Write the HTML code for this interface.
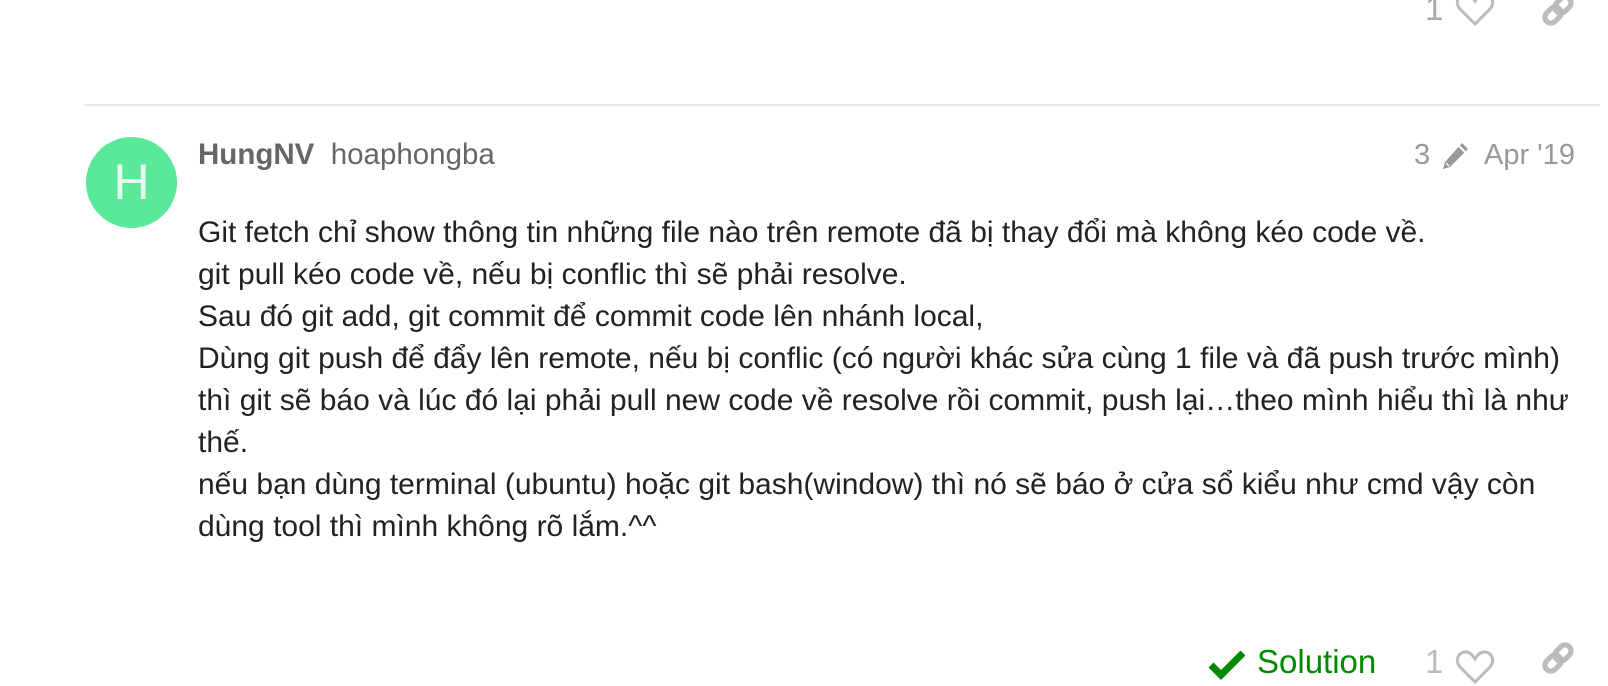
<!DOCTYPE html>
<html><head><meta charset="utf-8"><style>
body{margin:0;width:1608px;height:676px;background:#fff;font-family:"Liberation Sans",Arial,sans-serif;position:relative;overflow:hidden}
.a{position:absolute;white-space:nowrap}
.g{color:#999}
.body{left:198px;top:212px;font-size:30px;line-height:42px;color:#222;width:1382px;white-space:normal}
.body p{margin:0}
</style></head><body>
<div class="a g" style="left:1425px;top:-10px;font-size:33px;color:#aaa">1</div>
<svg class="a" style="left:1455px;top:-8px" width="40" height="36" viewBox="0 0 40 36"><path d="M20 32 L5 17 C-1 10 4 1 12 2 C16 3 18 6 20 9 C22 6 24 3 28 2 C36 1 41 10 35 17 Z" fill="none" stroke="#bbb" stroke-width="3"/></svg>
<svg class="a" style="left:1540px;top:-8px" width="36" height="36" viewBox="0 0 36 36"><g fill="none" stroke="#bbb" stroke-width="5" transform="rotate(-45 18 18)"><rect x="2" y="12" width="18" height="12" rx="6"/><rect x="16" y="12" width="18" height="12" rx="6"/></g></svg>
<div class="a" style="left:84px;top:104px;width:1516px;height:2px;background:#e9e9e9"></div>
<div class="a" style="left:86px;top:137px;width:91px;height:91px;border-radius:50%;background:#5ae89b;color:#e6fbef;font-size:50px;line-height:91px;text-align:center">H</div>
<div class="a" style="left:198px;top:138px;font-size:29.5px;color:#666"><b>HungNV</b>&nbsp; hoaphongba</div>
<div class="a g" style="left:1414px;top:139px;font-size:29px">3</div>
<svg class="a" style="left:1440px;top:141px" width="30" height="30" viewBox="0 0 30 30"><path d="M22 2 L28 8 L10 26 L3 28 L5 21 Z" fill="#999"/><path d="M19 5 L25 11" stroke="#fff" stroke-width="2"/><path d="M6 22 L9 25" stroke="#fff" stroke-width="1.5"/></svg>
<div class="a g" style="left:1484px;top:139px;font-size:29px">Apr '19</div>
<div class="a body">
<p>Git fetch chỉ show thông tin những file nào trên remote đã bị thay đổi mà không kéo code về.</p>
<p>git pull kéo code về, nếu bị conflic thì sẽ phải resolve.</p>
<p>Sau đó git add, git commit để commit code lên nhánh local,</p>
<p>Dùng git push để đẩy lên remote, nếu bị conflic (có người khác sửa cùng 1 file và đã push trước mình) thì git sẽ báo và lúc đó lại phải pull new code về resolve rồi commit, push lại…theo mình hiểu thì là như thế.</p>
<p>nếu bạn dùng terminal (ubuntu) hoặc git bash(window) thì nó sẽ báo ở cửa sổ kiểu như cmd vậy còn dùng tool thì mình không rõ lắm.^^</p>
</div>
<svg class="a" style="left:1208px;top:650px" width="38" height="30" viewBox="0 0 38 30"><path d="M3 15 L13 25 L35 3" fill="none" stroke="#008a00" stroke-width="7"/></svg>
<div class="a" style="left:1257px;top:643px;font-size:33px;color:#008a00">Solution</div>
<div class="a" style="left:1425px;top:643px;font-size:33px;color:#bbb">1</div>
<svg class="a" style="left:1455px;top:650px" width="40" height="36" viewBox="0 0 40 36"><path d="M20 32 L5 17 C-1 10 4 1 12 2 C16 3 18 6 20 9 C22 6 24 3 28 2 C36 1 41 10 35 17 Z" fill="none" stroke="#bbb" stroke-width="3"/></svg>
<svg class="a" style="left:1540px;top:640px" width="36" height="36" viewBox="0 0 36 36"><g fill="none" stroke="#bbb" stroke-width="5" transform="rotate(-45 18 18)"><rect x="2" y="12" width="18" height="12" rx="6"/><rect x="16" y="12" width="18" height="12" rx="6"/></g></svg>
</body></html>
